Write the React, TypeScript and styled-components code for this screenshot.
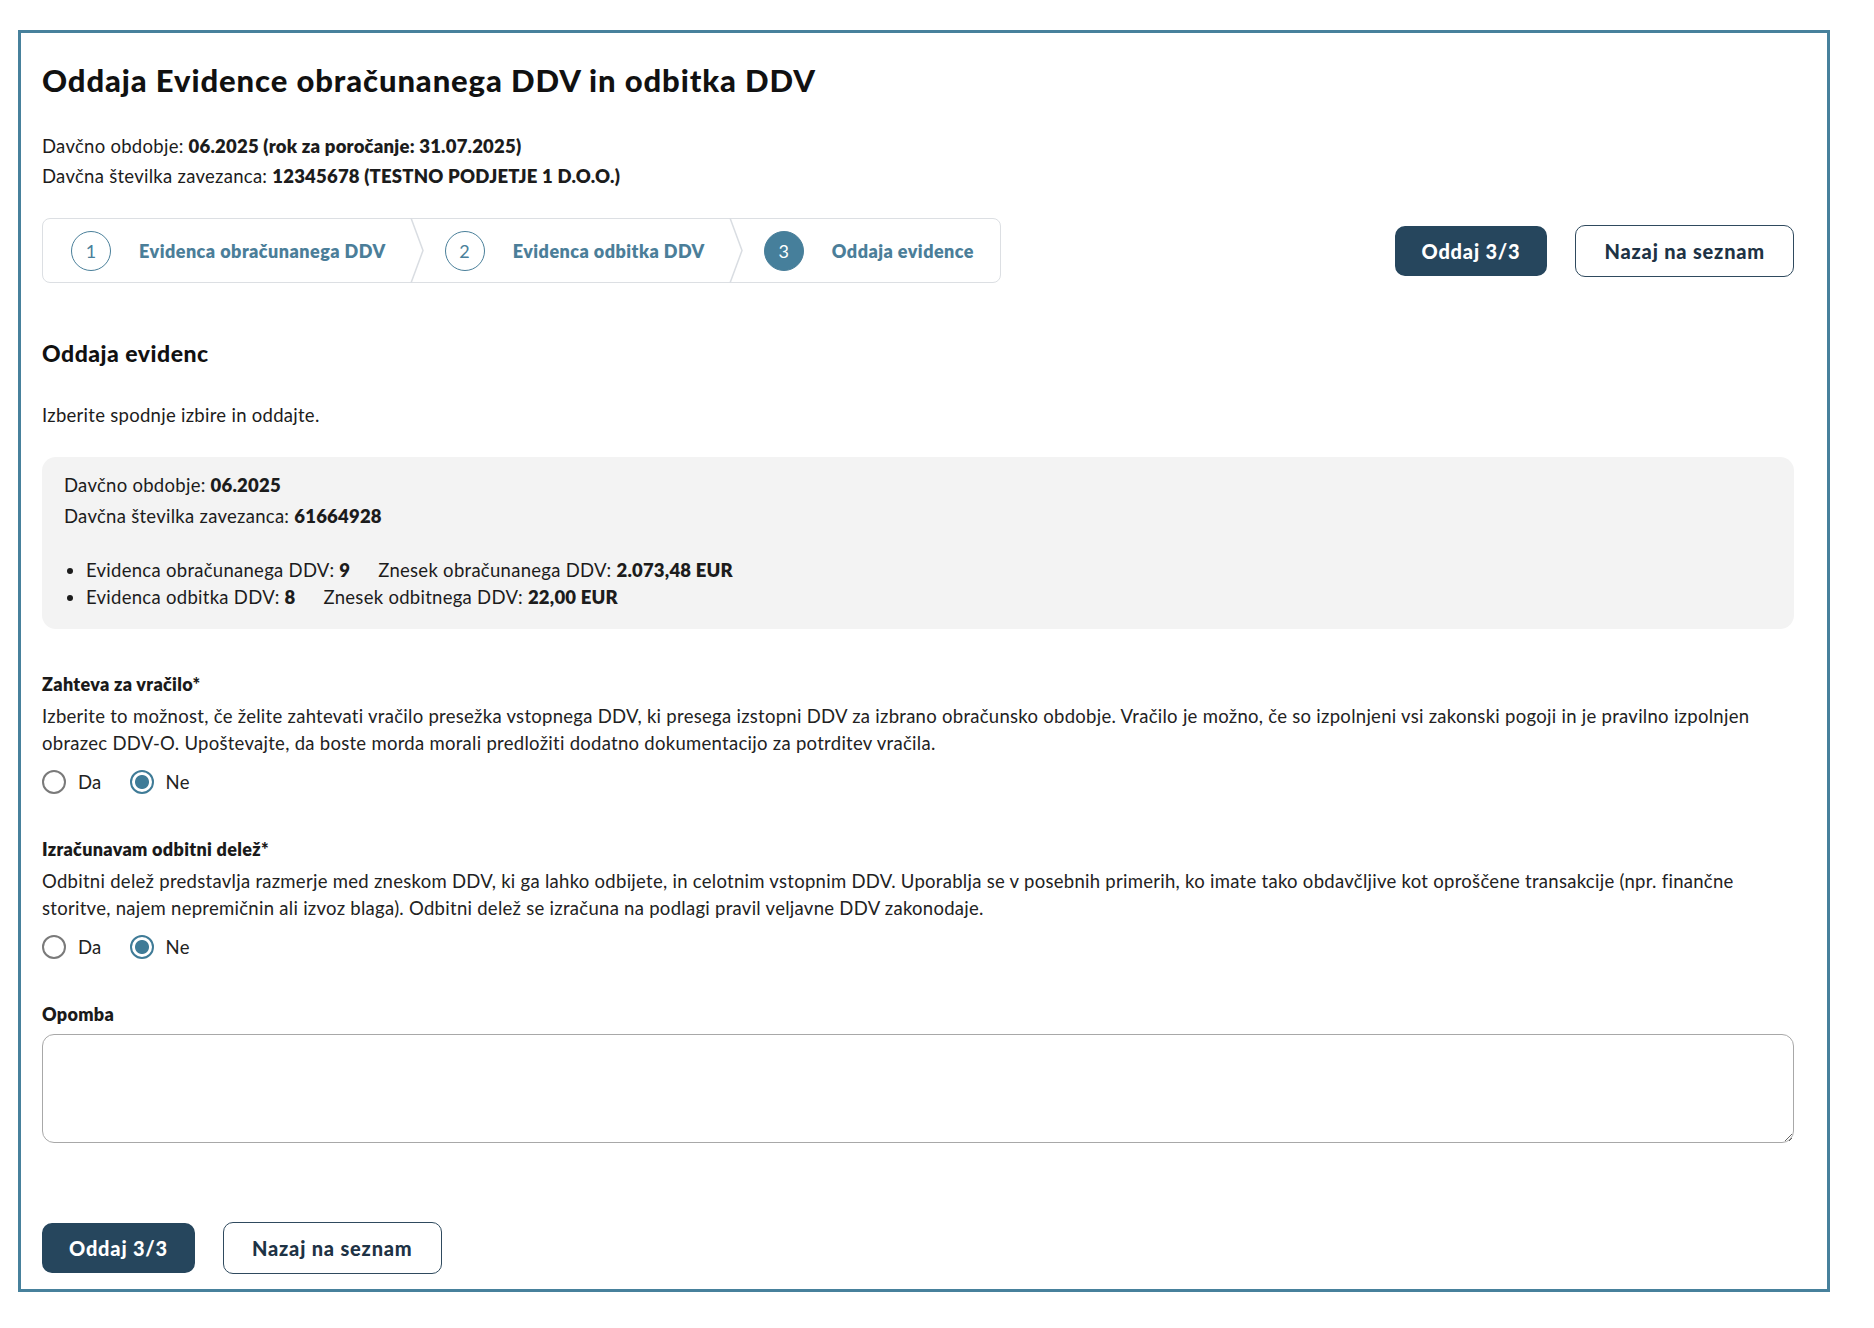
import styled, { createGlobalStyle } from "styled-components";

const GlobalStyle = createGlobalStyle`
	html, body {
		margin: 0;
		padding: 0;
		background: #ffffff;
	}
	body {
		font-family: Lato, "Noto Sans", sans-serif;
		color: #1c1c1c;
		letter-spacing: 0.28px;
	}
	b {
		font-weight: 800;
		letter-spacing: 0.2px;
	}
	* {
		box-sizing: border-box;
	}
`;

type Step = { num: number; label: string; active?: boolean };

const steps: Step[] = [
	{ num: 1, label: "Evidenca obračunanega DDV" },
	{ num: 2, label: "Evidenca odbitka DDV" },
	{ num: 3, label: "Oddaja evidence", active: true },
];

type Question = { title: string; text: string; name: string };

const questions: Question[] = [
	{
		title: "Zahteva za vračilo*",
		name: "vracilo",
		text: "Izberite to možnost, če želite zahtevati vračilo presežka vstopnega DDV, ki presega izstopni DDV za izbrano obračunsko obdobje. Vračilo je možno, če so izpolnjeni vsi zakonski pogoji in je pravilno izpolnjen obrazec DDV-O. Upoštevajte, da boste morda morali predložiti dodatno dokumentacijo za potrditev vračila.",
	},
	{
		title: "Izračunavam odbitni delež*",
		name: "delez",
		text: "Odbitni delež predstavlja razmerje med zneskom DDV, ki ga lahko odbijete, in celotnim vstopnim DDV. Uporablja se v posebnih primerih, ko imate tako obdavčljive kot oproščene transakcije (npr. finančne storitve, najem nepremičnin ali izvoz blaga). Odbitni delež se izračuna na podlagi pravil veljavne DDV zakonodaje.",
	},
];

function Chevron() {
	return (
		<Sep width="14" height="65" viewBox="0 0 14 65">
			<polyline points="1,0 13,32.5 1,65" fill="none" stroke="#d9dde2" strokeWidth="1.5" />
		</Sep>
	);
}

export default function App() {
	return (
		<>
			<GlobalStyle />
			<Page>
				<Frame>
					<Title>Oddaja Evidence obračunanega DDV in odbitka DDV</Title>
					<Info>
						<div>
							Davčno obdobje: <b>06.2025 (rok za poročanje: 31.07.2025)</b>
						</div>
						<div>
							Davčna številka zavezanca: <b>12345678 (TESTNO PODJETJE 1 D.O.O.)</b>
						</div>
					</Info>

					<TopRow>
						<Stepper>
							{steps.map((s, i) => (
								<StepGroup key={s.num}>
									{i > 0 && <Chevron />}
									<StepItem>
										<StepCircle $active={s.active}>{s.num}</StepCircle>
										<StepLabel>{s.label}</StepLabel>
									</StepItem>
								</StepGroup>
							))}
						</Stepper>
						<Actions>
							<PrimaryButton>Oddaj 3/3</PrimaryButton>
							<OutlineButton>Nazaj na seznam</OutlineButton>
						</Actions>
					</TopRow>

					<SectionTitle>Oddaja evidenc</SectionTitle>
					<Lead>Izberite spodnje izbire in oddajte.</Lead>

					<Summary>
						<SummaryLine>
							Davčno obdobje: <b>06.2025</b>
						</SummaryLine>
						<SummaryLine>
							Davčna številka zavezanca: <b>61664928</b>
						</SummaryLine>
						<Bullets>
							<li>
								Evidenca obračunanega DDV: <b>9</b>
								<Amount>
									Znesek obračunanega DDV: <b>2.073,48 EUR</b>
								</Amount>
							</li>
							<li>
								Evidenca odbitka DDV: <b>8</b>
								<Amount>
									Znesek odbitnega DDV: <b>22,00 EUR</b>
								</Amount>
							</li>
						</Bullets>
					</Summary>

					{questions.map((q) => (
						<Field key={q.name}>
							<FieldLabel>{q.title}</FieldLabel>
							<FieldText>{q.text}</FieldText>
							<RadioRow>
								<RadioOption>
									<Radio type="radio" name={q.name} value="da" />
									Da
								</RadioOption>
								<RadioOption>
									<Radio type="radio" name={q.name} value="ne" defaultChecked />
									Ne
								</RadioOption>
							</RadioRow>
						</Field>
					))}

					<NoteField>
						<FieldLabel>Opomba</FieldLabel>
						<Note />
					</NoteField>

					<BottomActions>
						<PrimaryButton>Oddaj 3/3</PrimaryButton>
						<OutlineButton>Nazaj na seznam</OutlineButton>
					</BottomActions>
				</Frame>
			</Page>
		</>
	);
}

const Page = styled.div`
	padding: 30px 0 0 18px;
`;

const Frame = styled.div`
	width: 1812px;
	border: 3px solid #47819c;
	padding: 29px 33px 15px 21px;
`;

const Title = styled.h1`
	margin: 0;
	font-size: 31px;
	line-height: 36px;
	font-weight: 900;
	letter-spacing: 0.9px;
	color: #111;
`;

const Info = styled.div`
	margin-top: 33px;
	font-size: 18.5px;
	line-height: 30px;
`;

const TopRow = styled.div`
	margin-top: 27px;
	display: flex;
	align-items: center;
	justify-content: space-between;
`;

const Stepper = styled.div`
	display: flex;
	align-items: stretch;
	height: 65px;
	border: 1.5px solid #dcdfe3;
	border-radius: 8px;
	padding: 0 26px 0 0;
`;

const StepGroup = styled.div`
	display: flex;
	align-items: center;
`;

const Sep = styled.svg`
	display: block;
	margin: 0 21px 0 24px;
`;

const StepItem = styled.div`
	display: flex;
	align-items: center;
	gap: 28px;

	${StepGroup}:first-child & {
		padding-left: 28px;
	}
`;

const StepCircle = styled.span<{ $active?: boolean }>`
	width: 40px;
	height: 40px;
	border-radius: 50%;
	border: 1.5px solid #4a7f9a;
	display: flex;
	align-items: center;
	justify-content: center;
	font-size: 18px;
	color: ${(p) => (p.$active ? "#fff" : "#4a7f9a")};
	background: ${(p) => (p.$active ? "#467f9b" : "transparent")};
`;

const StepLabel = styled.span`
	font-size: 18px;
	font-weight: 800;
	letter-spacing: 0.45px;
	color: #4b7e99;
`;

const Actions = styled.div`
	display: flex;
	align-items: center;
	gap: 28px;
`;

const PrimaryButton = styled.button`
	height: 50px;
	padding: 0 25px;
	border: 2px solid #26465d;
	border-radius: 10px;
	background: #26465d;
	color: #fff;
	font-family: Lato, sans-serif;
	font-size: 20px;
	font-weight: 900;
	letter-spacing: 0.8px;
	cursor: pointer;
`;

const OutlineButton = styled(PrimaryButton)`
	height: 52px;
	padding: 0 28px;
	background: #fff;
	color: #1e3345;
	border: 1.5px solid #2f4a5e;
`;

const SectionTitle = styled.h2`
	margin: 57px 0 0;
	font-size: 23px;
	line-height: 26px;
	font-weight: 900;
	letter-spacing: 0.5px;
	color: #111;
`;

const Lead = styled.p`
	margin: 36px 0 0;
	font-size: 18.5px;
	line-height: 27px;
`;

const Summary = styled.div`
	margin-top: 28px;
	background: #f3f3f3;
	border-radius: 14px;
	padding: 13px 22px 18px;
	font-size: 18.5px;
`;

const SummaryLine = styled.div`
	line-height: 31px;
`;

const Bullets = styled.ul`
	margin: 25px 0 0;
	padding-left: 22px;
	line-height: 27px;
`;

const Amount = styled.span`
	margin-left: 28px;
`;

const Field = styled.div`
	margin-top: 42px;

	& + & {
		margin-top: 42px;
	}
`;

const FieldLabel = styled.div`
	font-size: 18px;
	line-height: 27px;
	font-weight: 800;
	letter-spacing: 0.3px;
	color: #1a1a1a;
`;

const FieldText = styled.p`
	margin: 5px 0 0;
	font-size: 18.5px;
	line-height: 27px;
	color: #222;
`;

const RadioRow = styled.div`
	margin-top: 13px;
	display: flex;
	gap: 28px;
	height: 24px;
	align-items: center;
`;

const RadioOption = styled.label`
	display: flex;
	align-items: center;
	gap: 12px;
	font-size: 18.5px;
	color: #222;
`;

const Radio = styled.input`
	appearance: none;
	margin: 0;
	width: 24px;
	height: 24px;
	border-radius: 50%;
	border: 2px solid #7a7a7a;
	background: #fff;

	&:checked {
		border-color: #3f7b97;
		background: radial-gradient(circle, #3f7b97 0 6.5px, #fff 7.5px);
	}
`;

const NoteField = styled.div`
	margin-top: 42px;
`;

const Note = styled.textarea`
	display: block;
	margin-top: 6px;
	width: 100%;
	height: 109px;
	border: 1.5px solid #a8a8a8;
	border-radius: 12px;
	font-family: Lato, sans-serif;
	font-size: 18px;
	padding: 10px 14px;
`;

const BottomActions = styled.div`
	margin-top: 79px;
	display: flex;
	align-items: center;
	gap: 28px;
`;
